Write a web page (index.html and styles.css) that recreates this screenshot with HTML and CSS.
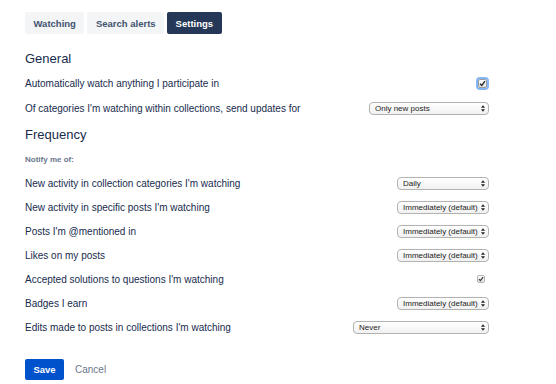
FILE: index.html
```html
<!doctype html>
<html lang="en">
    <head>
        <meta charset="utf-8">
        <title>Notification settings</title>
        <meta name="viewport" content="width=device-width, initial-scale=1">
        <link rel="stylesheet" href="styles.css">
    </head>
    <body>
        <main class="page">
            <nav class="tabs">
                <button class="tab">Watching</button>
                <button class="tab">Search alerts</button>
                <button class="tab tab-active">Settings</button>
            </nav>

            <section class="group">
                <h2 class="group-title">General</h2>
                <div class="setting setting-tall">
                    <span>Automatically watch anything I participate in</span>
                    <span class="check check-focus">
                        <svg viewBox="0 0 8 8" width="7" height="7"><path d="M1.2 4.2 L3.2 6.2 L6.8 1.4" fill="none" stroke="#222" stroke-width="1.5"/></svg>
                    </span>
                </div>
                <div class="setting setting-tall">
                    <span>Of categories I'm watching within collections, send updates for</span>
                    <span class="picker picker-wide">
                        <select><option>Only new posts</option></select>
                        <svg class="arrows" viewBox="0 0 5 8" width="4" height="7"><path d="M0 3.2 L2.5 0 L5 3.2 Z M0 4.8 L2.5 8 L5 4.8 Z" fill="#222"/></svg>
                    </span>
                </div>
            </section>

            <section class="group">
                <h2 class="group-title group-title-next">Frequency</h2>
                <p class="note">Notify me of:</p>
                <div class="rows">
                    <div class="setting">
                        <span>New activity in collection categories I'm watching</span>
                        <span class="picker">
                            <select><option>Daily</option></select>
                            <svg class="arrows" viewBox="0 0 5 8" width="4" height="7"><path d="M0 3.2 L2.5 0 L5 3.2 Z M0 4.8 L2.5 8 L5 4.8 Z" fill="#222"/></svg>
                        </span>
                    </div>
                    <div class="setting">
                        <span>New activity in specific posts I'm watching</span>
                        <span class="picker">
                            <select><option>Immediately (default)</option></select>
                            <svg class="arrows" viewBox="0 0 5 8" width="4" height="7"><path d="M0 3.2 L2.5 0 L5 3.2 Z M0 4.8 L2.5 8 L5 4.8 Z" fill="#222"/></svg>
                        </span>
                    </div>
                    <div class="setting">
                        <span>Posts I'm @mentioned in</span>
                        <span class="picker">
                            <select><option>Immediately (default)</option></select>
                            <svg class="arrows" viewBox="0 0 5 8" width="4" height="7"><path d="M0 3.2 L2.5 0 L5 3.2 Z M0 4.8 L2.5 8 L5 4.8 Z" fill="#222"/></svg>
                        </span>
                    </div>
                    <div class="setting">
                        <span>Likes on my posts</span>
                        <span class="picker">
                            <select><option>Immediately (default)</option></select>
                            <svg class="arrows" viewBox="0 0 5 8" width="4" height="7"><path d="M0 3.2 L2.5 0 L5 3.2 Z M0 4.8 L2.5 8 L5 4.8 Z" fill="#222"/></svg>
                        </span>
                    </div>
                    <div class="setting">
                        <span>Accepted solutions to questions I'm watching</span>
                        <span class="check check-small">
                            <svg viewBox="0 0 8 8" width="6" height="6"><path d="M1.2 4.2 L3.2 6.2 L6.8 1.4" fill="none" stroke="#333" stroke-width="1.5"/></svg>
                        </span>
                    </div>
                    <div class="setting">
                        <span>Badges I earn</span>
                        <span class="picker">
                            <select><option>Immediately (default)</option></select>
                            <svg class="arrows" viewBox="0 0 5 8" width="4" height="7"><path d="M0 3.2 L2.5 0 L5 3.2 Z M0 4.8 L2.5 8 L5 4.8 Z" fill="#222"/></svg>
                        </span>
                    </div>
                    <div class="setting">
                        <span>Edits made to posts in collections I'm watching</span>
                        <span class="picker picker-never">
                            <select><option>Never</option></select>
                            <svg class="arrows" viewBox="0 0 5 8" width="4" height="7"><path d="M0 3.2 L2.5 0 L5 3.2 Z M0 4.8 L2.5 8 L5 4.8 Z" fill="#222"/></svg>
                        </span>
                    </div>
                </div>
            </section>

            <div class="actions">
                <button class="button">Save</button>
                <button class="link">Cancel</button>
            </div>
        </main>
    </body>
</html>
```

FILE: styles.css
```css
* {
    margin: 0;
    padding: 0;
    box-sizing: border-box;
}

body {
    font-family: "Liberation Sans", Arial, sans-serif;
    font-size: 10px;
    color: #172b4d;
    background: #fff;
}

.page {
    width: 489px;
    padding: 12px 0 0 25px;
}

.tabs {
    display: flex;
    gap: 3px;
}

.tab {
    height: 22px;
    padding: 0 8.5px;
    border: 0;
    border-radius: 2px;
    background-color: #f4f5f7;
    color: #42526e;
    font-family: inherit;
    font-size: 9.5px;
    font-weight: bold;
}

.tab-active {
    background-color: #253858;
    color: #fff;
}

.group-title {
    margin-top: 16px;
    margin-bottom: 4px;
    font-size: 13px;
    font-weight: normal;
    line-height: 17px;
    color: #172b4d;
}

.group-title-next {
    margin-top: 5px;
    margin-bottom: 0;
}

.note {
    margin-top: 11px;
    font-size: 8px;
    font-weight: bold;
    line-height: 12px;
    color: #6b778c;
}

.rows {
    margin-top: 5px;
}

.setting {
    display: flex;
    align-items: center;
    justify-content: space-between;
    height: 24px;
}

.setting-tall {
    height: 25px;
}

.check {
    display: flex;
    align-items: center;
    justify-content: center;
    width: 9px;
    height: 9px;
    border: 1px solid #9a9a9a;
    border-radius: 2px;
    background: linear-gradient(#fdfdfd, #e2e2e2);
}

.check-focus {
    margin-right: 2px;
    box-shadow: 0 0 0 2px #82b6f4;
}

.check-small {
    width: 8px;
    height: 8px;
    margin-right: 4px;
    border-color: #b5b5b5;
}

.picker {
    position: relative;
    display: block;
    width: 92px;
    height: 13px;
}

.picker-wide {
    width: 120px;
}

.picker-never {
    width: 136px;
}

.picker select {
    appearance: none;
    -webkit-appearance: none;
    width: 100%;
    height: 100%;
    padding: 0 6px 0 5px;
    border: 1px solid #b2b2b2;
    border-radius: 4px;
    background: linear-gradient(#ffffff, #f1f1f1);
    color: #222;
    font-family: inherit;
    font-size: 8px;
    line-height: 11px;
}

.arrows {
    position: absolute;
    top: 3px;
    right: 4px;
}

.actions {
    display: flex;
    align-items: center;
    gap: 11px;
    margin-top: 20px;
}

.button {
    width: 39px;
    height: 21px;
    border: 0;
    border-radius: 2px;
    background-color: #0052cc;
    color: #fff;
    font-family: inherit;
    font-size: 9.5px;
    font-weight: bold;
}

.link {
    border: 0;
    background: none;
    color: #6b778c;
    font-family: inherit;
    font-size: 10px;
}
```
